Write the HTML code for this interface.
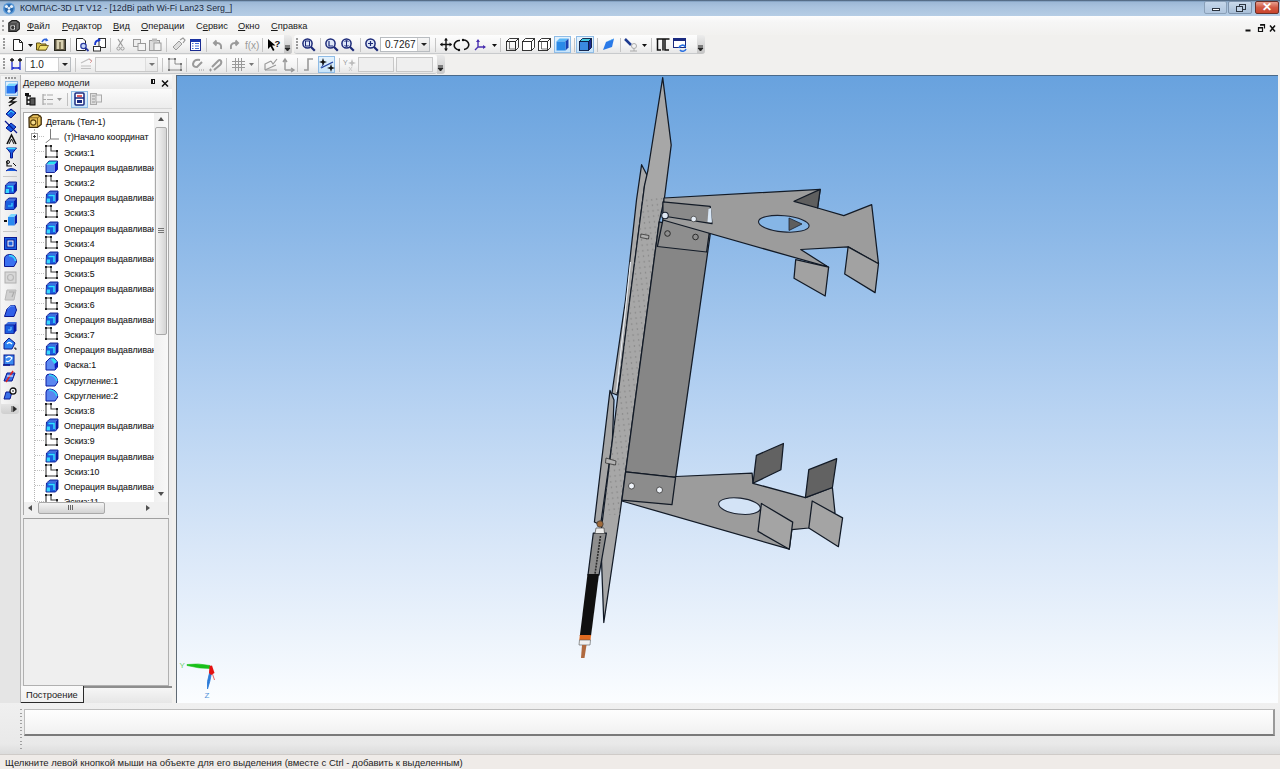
<!DOCTYPE html>
<html><head><meta charset="utf-8">
<style>
*{margin:0;padding:0;box-sizing:border-box}
html,body{width:1280px;height:769px;overflow:hidden;background:#f1f0ee;font-family:"Liberation Sans",sans-serif;font-size:9px;color:#000;position:relative}
.a{position:absolute}
svg{position:absolute;overflow:visible}
#title{left:0;top:0;width:1280px;height:16px;background:linear-gradient(#3c4c5e 0,#6f8fb0 1px,#9cb8d6 2px,#a9c3de 45%,#b6cde5 100%)}
#title .t{left:20px;top:3px;font-size:8.8px;color:#1b2a40;white-space:nowrap}
#menu{left:0;top:16px;width:1280px;height:19px;background:linear-gradient(#fdfdfd 0,#f6f6f6 6px,#f2f1ef 19px)}
#menu span{position:absolute;top:5px;font-size:9.3px;color:#1a1a1a;white-space:nowrap}
.tbar{height:19px;background:linear-gradient(#fdfdfd,#f4f4f4 60%,#e6e6e6);border-bottom:1px solid #c8cacc;border-radius:0 3px 3px 0}
.grip{width:2px;height:11px;border-left:2px dotted #a8a8a8}
.sep{width:1px;height:15px;background:#c8c8c8;border-right:1px solid #fff}
.chev{width:8px;height:19px;background:linear-gradient(#e8e8e8,#c9c9c9);border-radius:0 3px 3px 0}
.combo{height:15px;background:#fff;border:1px solid #b8bcc0;font-size:9.5px;color:#222}
.combo .dd{position:absolute;right:0;top:0;width:12px;height:13px;background:linear-gradient(#f6f6f6,#e2e2e2);border-left:1px solid #cfcfcf}
.combo .dd:after{content:"";position:absolute;left:3px;top:5px;border-left:3px solid transparent;border-right:3px solid transparent;border-top:3px solid #222}
.hl{background:linear-gradient(#e4f2fd,#c8e4fa);border:1px solid #8fbce6}
#lefttb{left:1px;top:76px;width:18px;height:330px;background:linear-gradient(90deg,#f6f6f6,#e6e6e6);border-radius:0 0 4px 4px}
#panel{left:20px;top:75px;width:152px;height:628px;background:#eeeeee;border-left:1px solid #b4b4b4}
#phead{left:21px;top:75px;width:151px;height:14px;background:linear-gradient(#fafafa,#e9e9e9)}
#ptb{left:21px;top:89px;width:151px;height:20px;background:linear-gradient(#fbfbfb,#ececec);border-bottom:1px solid #d6d6d6}
#tree{left:23px;top:112px;width:146px;height:403px;background:#fff;border:1px solid #a9a9a9;overflow:hidden}
.row{position:absolute;left:0;height:15px;white-space:nowrap;font-size:9.6px;color:#111;transform:scaleX(0.91);transform-origin:0 0;-webkit-text-stroke:0.1px #333}
#lower{left:23px;top:518px;width:146px;height:168px;background:#efefef;border:1px solid #b0b0b0;border-top-color:#a0a0a0}
#view{left:176px;top:75px;width:1102px;height:628px;background:linear-gradient(#68a2de 0%,#8cb8e7 25%,#b3d0f1 50%,#d9e7f8 75%,#fbfdff 100%);border-left:1px solid #606a74;border-top:1px solid #4a6a8a;overflow:hidden}
#bottom{left:0;top:703px;width:1280px;height:51px;background:linear-gradient(#f0f0f0,#e9e9e9 80%,#dcdcdc)}
#inp{left:24px;top:709px;width:1251px;height:27px;background:linear-gradient(#fefefe,#f1f1f1);border:1px solid #bdbdbd;border-bottom:2px solid #7a7a7a;border-right:2px solid #9a9a9a}
#status{left:0;top:754px;width:1280px;height:15px;background:#efebe8;border-top:1px solid #cfcbc8}
#status .t{left:5px;top:2px;font-size:9.5px;color:#1c1c1c;white-space:nowrap}
</style></head><body>
<svg width="0" height="0" style="position:absolute;left:0;top:0"><defs>
<symbol id="i-det" viewBox="0 0 14 14"><path d="M1 3.5 L5 0.7 L10 0.7 L13.2 3.2 L13.2 10.5 L9.5 13.3 L1.2 13.3 Z" fill="#e9c25a" stroke="#3b2a0c" stroke-width="1.3"/><path d="M1.5 3.8 L9.5 3.8 L13 1.5 M9.5 3.8 V13" stroke="#6b4a10" stroke-width="0.8" fill="none"/><circle cx="5.3" cy="8.5" r="2.6" fill="#f5dc8a" stroke="#5a3f0c" stroke-width="1.1"/></symbol>
<symbol id="i-sk" viewBox="0 0 14 14"><path d="M1 1 H6 V6 H12 V12 H1 Z" fill="none" stroke="#3a3a3a" stroke-width="1.1"/><g fill="#222"><rect x="0" y="0" width="2" height="2"/><rect x="5" y="0" width="2" height="2"/><rect x="11" y="5" width="2" height="2"/><rect x="11" y="11" width="2" height="2"/><rect x="0" y="11" width="2" height="2"/></g></symbol>
<symbol id="i-cube" viewBox="0 0 14 14"><path d="M1 4.5 L4 1 L12.5 1 L9.5 4.5 Z" fill="#29e3f2"/><path d="M9.5 4.5 L12.5 1 L12.5 9.5 L9.5 12.5 Z" fill="#0c14c8"/><rect x="1" y="4.5" width="8.5" height="8" fill="#5b88ee"/><path d="M1 4.5 L4 1 L12.5 1 L12.5 9.5 L9.5 12.5 L1 12.5 Z" fill="none" stroke="#0a1890" stroke-width="0.9"/></symbol>
<symbol id="i-boss" viewBox="0 0 14 14"><path d="M2 4 L5 1 L13 1 L10.5 4 Z" fill="#3f6fe0"/><path d="M10.5 4 L13 1 L13 10 L10.5 13 Z" fill="#0a1aa8"/><rect x="1.5" y="4" width="9" height="9" fill="#1a5ee0"/><path d="M3.5 5.5 H9 V11" fill="none" stroke="#33e0ff" stroke-width="1.5"/><rect x="1" y="8.5" width="4" height="4.5" fill="#38d8ff"/><path d="M1.5 4 L5 1 L13 1 L13 10 L10.5 13 L1 13 Z" fill="none" stroke="#0a1890" stroke-width="0.9"/></symbol>
<symbol id="i-cham" viewBox="0 0 14 14"><path d="M1 13 V5 L5 1 H9 L12.5 5 V10 L10 13 Z" fill="#5c8af2" stroke="#0a1aa0" stroke-width="1"/><path d="M5.5 1.5 L9 1.5 L12 5 L9.5 7 Z" fill="#2ee0f5"/><path d="M9.5 7 L12 5 V10 L10 12.5 Z" fill="#0c1cc0"/></symbol>
<symbol id="i-fil" viewBox="0 0 14 14"><path d="M1 13 V4 Q1 1 5 1 Q12 1.5 12.8 9 L10 13 Z" fill="#5a86f0" stroke="#0a1aa0" stroke-width="1"/><path d="M4 2 Q10 2 12 8" fill="none" stroke="#30d8f5" stroke-width="1.5"/></symbol>
<symbol id="i-axis" viewBox="0 0 14 14"><path d="M5.5 0 V10 H14 M5.5 10 L0.5 14" fill="none" stroke="#7a7a7a" stroke-width="1"/></symbol>
</defs></svg>

<div id="title" class="a"><div class="t a">КОМПАС-3D LT V12 - [12dBi path Wi-Fi Lan23 Serg_]</div>
<svg style="left:2px;top:2px" width="14" height="13" viewBox="0 0 14 13"><circle cx="7" cy="6.5" r="6" fill="#5a9ad8"/><circle cx="7" cy="6.5" r="4.5" fill="#2a6ab0"/><circle cx="4.5" cy="4.5" r="1.6" fill="#e8f2fb"/><circle cx="9.5" cy="4.5" r="1.6" fill="#e8f2fb"/><circle cx="7" cy="9.2" r="1.6" fill="#e8f2fb"/><circle cx="7" cy="6.2" r="1.2" fill="#e8f2fb"/></svg>
<div class="a" style="left:1204px;top:1px;width:23px;height:13px;border:1px solid #8aa0b8;border-radius:2px;background:linear-gradient(#c4d6ea,#b0c6de)"><div class="a" style="left:7px;top:6px;width:8px;height:3px;border:1px solid #2b3440;background:#fff"></div></div>
<div class="a" style="left:1228px;top:1px;width:24px;height:13px;border:1px solid #7d93ad;border-radius:2px;background:linear-gradient(#c9d9ea,#a8bfd8)"><div class="a" style="left:10px;top:2px;width:7px;height:6px;border:1px solid #2b3440"></div><div class="a" style="left:7px;top:4px;width:7px;height:6px;border:1px solid #2b3440;background:#c0d2e6"></div></div>
<div class="a" style="left:1255px;top:1px;width:24px;height:13px;border:1px solid #6b3028;border-radius:2px;background:linear-gradient(#e8a090,#d25a44 50%,#c9442c)"><div class="a" style="left:6px;top:-2px;font-size:12px;font-weight:bold;color:#fff">✕</div></div>
</div>
<div id="menu" class="a">
<div class="grip a" style="left:2px;top:4px"></div>
<svg style="left:8px;top:4px" width="12" height="12" viewBox="0 0 12 12"><path d="M0.8 3 L4 0.7 L8.5 0.7 L11.3 2.8 L11.3 9 L8.3 11.3 L0.8 11.3 Z" fill="#707070" stroke="#222" stroke-width="1.2"/><path d="M1.2 3.4 H8.2 L11 1.3 M8.2 3.4 V11" stroke="#444" stroke-width="0.8" fill="none"/><rect x="2" y="5" width="5.5" height="5" fill="#f2f2f2" stroke="#222" stroke-width="0.8"/><circle cx="4.7" cy="7.5" r="1.7" fill="#333"/></svg>
<span style="left:27px"><u>Ф</u>айл</span>
<span style="left:62px"><u>Р</u>едактор</span>
<span style="left:113px"><u>В</u>ид</span>
<span style="left:141px"><u>О</u>перации</span>
<span style="left:196px">С<u>е</u>рвис</span>
<span style="left:238px"><u>О</u>кно</span>
<span style="left:271px"><u>С</u>правка</span>
<svg style="left:1244px;top:7px" width="34" height="10" viewBox="0 0 34 10"><rect x="1.5" y="6.5" width="5" height="2" fill="#111"/><path d="M16.5 1.5 H20.5 V5.5 M14.5 4.5 H18.5 V8.5 H14.5 Z" fill="none" stroke="#111" stroke-width="1.2"/><path d="M16 2 H21" stroke="#111" stroke-width="1.5"/><path d="M14 4.8 H19" stroke="#111" stroke-width="1.5"/><path d="M26 2.5 L31 8.5 M31 2.5 L26 8.5" stroke="#111" stroke-width="1.5"/></svg>
</div>

<div id="tb1" class="a tbar" style="left:0;top:35px;width:292px"></div>
<div id="tb2" class="a tbar" style="left:0;top:55px;width:437px"></div>
<div class="a chev" style="left:437px;top:55px;height:19px"></div>
<div class="a" style="left:3px;top:38px;width:2px;height:2px;background:#9a9a9a"></div>
<div class="a" style="left:3px;top:41px;width:2px;height:2px;background:#9a9a9a"></div>
<div class="a" style="left:3px;top:44px;width:2px;height:2px;background:#9a9a9a"></div>
<div class="a" style="left:3px;top:47px;width:2px;height:2px;background:#9a9a9a"></div>
<svg style="left:13px;top:39px" width="10" height="12" viewBox="0 0 10 12"><path d="M0.5 0.5 H6.5 L9.5 3.5 V11.5 H0.5 Z" fill="#fff" stroke="#222" stroke-width="1"/><path d="M6.5 0.5 V3.5 H9.5" fill="none" stroke="#222"/></svg>
<svg style="left:28px;top:44px" width="5" height="3" viewBox="0 0 5 3"><path d="M0 0 H5 L2.5 3 Z" fill="#111"/></svg>
<svg style="left:36px;top:38px" width="13" height="13" viewBox="0 0 13 13"><path d="M0.5 5 H4 L5 6 H10 V12 H0.5 Z" fill="#d8c048" stroke="#5a4a10"/><path d="M2 12 L4 7.5 H12.5 L10 12 Z" fill="#f0e070" stroke="#5a4a10" stroke-width="0.8"/><path d="M6 4 Q8 0 11 2" fill="none" stroke="#2a60d8" stroke-width="1.6"/><path d="M10 0 L12.5 2.5 L9.5 3.5 Z" fill="#2a60d8"/></svg>
<svg style="left:54px;top:39px" width="12" height="12" viewBox="0 0 12 12"><rect x="0.5" y="0.5" width="11" height="11" fill="#5c5440" stroke="#2a2a20"/><rect x="2.5" y="1" width="7" height="9" fill="#d8d0b0"/><rect x="5" y="3" width="2" height="7" fill="#8a8060"/></svg>
<div class="a" style="left:70px;top:38px;width:1px;height:14px;background:#c5c5c5"></div>
<svg style="left:76px;top:38px" width="13" height="14" viewBox="0 0 13 14"><path d="M0.5 0.5 H7 L9.5 3 V12.5 H0.5 Z" fill="#fff" stroke="#222"/><circle cx="7.5" cy="8" r="2.7" fill="#c8d8f8" stroke="#2838a0" stroke-width="1.2"/><path d="M9.5 10 L12.5 13" stroke="#2838a0" stroke-width="1.8"/></svg>
<svg style="left:93px;top:38px" width="13" height="14" viewBox="0 0 13 14"><rect x="6" y="0.5" width="6.5" height="9" fill="#fff" stroke="#333"/><rect x="0.5" y="8.5" width="7" height="4.5" fill="#fff" stroke="#333"/><path d="M2 7 Q2 2 7 2" fill="none" stroke="#1838d0" stroke-width="1.8"/><path d="M5 0 L8 2 L5 4 Z" fill="#1838d0"/></svg>
<div class="a" style="left:110px;top:38px;width:1px;height:14px;background:#c5c5c5"></div>
<svg style="left:117px;top:39px" width="7" height="12" viewBox="0 0 7 12"><path d="M1 0 L5.5 7 M6 0 L1.5 7" stroke="#9a9a9a" stroke-width="1.2"/><circle cx="1.5" cy="9.5" r="1.6" fill="none" stroke="#9a9a9a"/><circle cx="5.5" cy="9.5" r="1.6" fill="none" stroke="#9a9a9a"/></svg>
<svg style="left:133px;top:39px" width="13" height="12" viewBox="0 0 13 12"><rect x="0.5" y="0.5" width="7" height="7" fill="#eee" stroke="#9a9a9a"/><rect x="5" y="4.5" width="7.5" height="7" fill="#f4f4f4" stroke="#9a9a9a"/></svg>
<svg style="left:149px;top:38px" width="13" height="13" viewBox="0 0 13 13"><rect x="0.5" y="2.5" width="10" height="10" fill="#ddd" stroke="#9a9a9a"/><rect x="3" y="0.5" width="5" height="3" fill="#bbb"/><rect x="5" y="5" width="7" height="7.5" fill="#f2f2f2" stroke="#9a9a9a"/></svg>
<div class="a" style="left:166px;top:38px;width:1px;height:14px;background:#c5c5c5"></div>
<svg style="left:172px;top:38px" width="13" height="13" viewBox="0 0 13 13"><path d="M1 9 L7 3 L10 6 L4 12 Z" fill="#ddd" stroke="#9a9a9a"/><path d="M8 2 L11 0 L13 2 L11 5" fill="none" stroke="#9a9a9a" stroke-width="1.2"/></svg>
<svg style="left:190px;top:39px" width="11" height="12" viewBox="0 0 11 12"><rect x="0.5" y="0.5" width="10" height="11" fill="#fff" stroke="#1a2a90"/><rect x="0.5" y="0.5" width="10" height="2.5" fill="#1a3ab0"/><path d="M2 4.5 H3.5 M5 4.5 H9 M2 7 H3.5 M5 7 H9 M2 9.5 H3.5 M5 9.5 H9" stroke="#3060d0" stroke-width="0.9"/></svg>
<div class="a" style="left:206px;top:38px;width:1px;height:14px;background:#c5c5c5"></div>
<svg style="left:213px;top:40px" width="10" height="10" viewBox="0 0 10 10"><path d="M8 9 Q9 3 4 3 H1 M3.5 0.5 L1 3 L3.5 5.5" fill="none" stroke="#9a9a9a" stroke-width="2"/></svg>
<svg style="left:229px;top:40px" width="10" height="10" viewBox="0 0 10 10"><path d="M2 9 Q1 3 6 3 H9 M6.5 0.5 L9 3 L6.5 5.5" fill="none" stroke="#9a9a9a" stroke-width="2"/></svg>
<svg style="left:245px;top:39px" width="13" height="12" viewBox="0 0 13 12"><text x="0" y="10" font-size="10" fill="#9a9a9a" font-family="Liberation Sans">f(x)</text></svg>
<div class="a" style="left:262px;top:38px;width:1px;height:14px;background:#c5c5c5"></div>
<svg style="left:267px;top:38px" width="15" height="14" viewBox="0 0 15 14"><path d="M1 1 L1 11 L3.5 8.5 L6 13 L7.5 12 L5 7.5 L8.5 7.5 Z" fill="#000"/><text x="7.5" y="9" font-size="9.5" font-weight="bold" fill="#111" font-family="Liberation Sans">?</text></svg>
<div class="a" style="left:284px;top:35px;width:8px;height:19px;background:linear-gradient(#ececec,#c4c4c4);border-radius:0 3px 3px 0"></div>
<svg style="left:285px;top:46px" width="5" height="6" viewBox="0 0 5 6"><path d="M0 0 H5 M0 2 L5 2 L2.5 5 Z" stroke="#222" stroke-width="1" fill="#222"/></svg>
<div class="a tbar" style="left:294px;top:35px;width:403px;border-radius:3px 0 0 3px"></div>
<div class="a" style="left:296px;top:38px;width:2px;height:2px;background:#9a9a9a"></div>
<div class="a" style="left:296px;top:41px;width:2px;height:2px;background:#9a9a9a"></div>
<div class="a" style="left:296px;top:44px;width:2px;height:2px;background:#9a9a9a"></div>
<div class="a" style="left:296px;top:47px;width:2px;height:2px;background:#9a9a9a"></div>
<svg style="left:302px;top:38px" width="14" height="14" viewBox="0 0 14 14"><circle cx="5.5" cy="5.5" r="4.6" fill="#dfe8f8" stroke="#1c2a78" stroke-width="1.5"/><path d="M8.8 8.8 L12.8 12.8" stroke="#1c2a78" stroke-width="2.2"/><rect x="3.5" y="3" width="4" height="5" fill="none" stroke="#1c2a78" stroke-width="1"/></svg>
<div class="a" style="left:320px;top:38px;width:1px;height:14px;background:#c5c5c5"></div>
<svg style="left:325px;top:38px" width="14" height="14" viewBox="0 0 14 14"><circle cx="5.5" cy="5.5" r="4.6" fill="#dfe8f8" stroke="#1c2a78" stroke-width="1.5"/><path d="M8.8 8.8 L12.8 12.8" stroke="#1c2a78" stroke-width="2.2"/><path d="M4 3 V8 H8" fill="none" stroke="#1c2a78" stroke-width="1.2"/></svg>
<svg style="left:341px;top:38px" width="14" height="14" viewBox="0 0 14 14"><circle cx="5.5" cy="5.5" r="4.6" fill="#dfe8f8" stroke="#1c2a78" stroke-width="1.5"/><path d="M8.8 8.8 L12.8 12.8" stroke="#1c2a78" stroke-width="2.2"/><path d="M5.5 2.5 V8.5 M3.5 4 L5.5 2 L7.5 4 M3.5 7 L5.5 9 L7.5 7" fill="none" stroke="#1c2a78" stroke-width="1"/></svg>
<div class="a" style="left:360px;top:38px;width:1px;height:14px;background:#c5c5c5"></div>
<svg style="left:365px;top:38px" width="14" height="14" viewBox="0 0 14 14"><circle cx="5.5" cy="5.5" r="4.6" fill="#dfe8f8" stroke="#1c2a78" stroke-width="1.5"/><path d="M8.8 8.8 L12.8 12.8" stroke="#1c2a78" stroke-width="2.2"/><path d="M3 5.5 H8 M5.5 3 V8" stroke="#1c2a78" stroke-width="1.2"/></svg>
<div class="a combo" style="left:380px;top:37px;width:50px;height:15px"><div class="a" style="left:4px;top:1px;font-size:10px;color:#222">0.7267</div><div class="dd"></div></div>
<div class="a" style="left:435px;top:38px;width:1px;height:14px;background:#c5c5c5"></div>
<svg style="left:440px;top:38px" width="12" height="13" viewBox="0 0 12 13"><path d="M6 0.5 V12.5 M0.5 6.5 H11.5" stroke="#111" stroke-width="1.4"/><path d="M6 0 L8 2.5 H4 Z M6 13 L8 10.5 H4 Z M0 6.5 L2.5 4.5 V8.5 Z M12 6.5 L9.5 4.5 V8.5 Z" fill="#111"/></svg>
<svg style="left:455px;top:39px" width="13" height="12" viewBox="0 0 13 12"><path d="M5 1.5 A5 4.5 0 0 0 4 11 M8 1 A5 4.5 0 0 1 9 10.5" fill="none" stroke="#111" stroke-width="1.6"/><circle cx="4" cy="11" r="1.2" fill="#111"/><circle cx="8" cy="1" r="1.2" fill="#111"/></svg>
<svg style="left:474px;top:39px" width="12" height="12" viewBox="0 0 12 12"><path d="M4 1 V8 L1 11 M4 8 H11" fill="none" stroke="#4a30b0" stroke-width="1.4"/><path d="M4 0 L6 3 H2 Z M12 8 L9 6 V10 Z" fill="#4a30b0"/></svg>
<svg style="left:492px;top:44px" width="5" height="3" viewBox="0 0 5 3"><path d="M0 0 H5 L2.5 3 Z" fill="#111"/></svg>
<div class="a" style="left:500px;top:38px;width:1px;height:14px;background:#c5c5c5"></div>
<svg style="left:506px;top:38px" width="13" height="13" viewBox="0 0 13 13"><path d="M0.5 3.5 L3.5 0.5 H12.5 L9.5 3.5 Z" fill="none" stroke="#222" stroke-width="0.9"/><path d="M9.5 3.5 L12.5 0.5 V9.5 L9.5 12.5 Z" fill="none" stroke="#222" stroke-width="0.9"/><rect x="0.5" y="3.5" width="9" height="9" fill="none" stroke="#222" stroke-width="0.9"/><path d="M3.5 3.5 V11 M3.5 11 H10" fill="none" stroke="#555" stroke-width="0.8"/></svg>
<svg style="left:522px;top:38px" width="13" height="13" viewBox="0 0 13 13"><path d="M0.5 3.5 L3.5 0.5 H12.5 L9.5 3.5 Z" fill="#fff" stroke="#222" stroke-width="0.9"/><path d="M9.5 3.5 L12.5 0.5 V9.5 L9.5 12.5 Z" fill="#fff" stroke="#222" stroke-width="0.9"/><rect x="0.5" y="3.5" width="9" height="9" fill="#fff" stroke="#222" stroke-width="0.9"/></svg>
<svg style="left:538px;top:38px" width="13" height="13" viewBox="0 0 13 13"><path d="M0.5 3.5 L3.5 0.5 H12.5 L9.5 3.5 Z" fill="#fff" stroke="#222" stroke-width="0.9"/><path d="M9.5 3.5 L12.5 0.5 V9.5 L9.5 12.5 Z" fill="#fff" stroke="#222" stroke-width="0.9"/><rect x="0.5" y="3.5" width="9" height="9" fill="#fff" stroke="#222" stroke-width="0.9"/><path d="M3.5 3.5 V11 M3.5 11 H10" fill="none" stroke="#555" stroke-width="0.8"/></svg>
<div class="a hl" style="left:554px;top:36px;width:17px;height:17px"></div>
<svg style="left:556px;top:38px" width="13" height="13" viewBox="0 0 13 13"><path d="M0.5 3.5 L3.5 0.5 H12.5 L9.5 3.5 Z" fill="#5ab8f8" stroke="none" stroke-width="0.9"/><path d="M9.5 3.5 L12.5 0.5 V9.5 L9.5 12.5 Z" fill="#1a40b0" stroke="none" stroke-width="0.9"/><rect x="0.5" y="3.5" width="9" height="9" fill="#2a8ae8" stroke="none" stroke-width="0.9"/></svg>
<div class="a" style="left:574px;top:38px;width:1px;height:14px;background:#c5c5c5"></div>
<div class="a hl" style="left:576px;top:36px;width:18px;height:17px"></div>
<svg style="left:579px;top:38px" width="13" height="13" viewBox="0 0 13 13"><path d="M0.5 3.5 L3.5 0.5 H12.5 L9.5 3.5 Z" fill="#40c8e0" stroke="#0a1a40" stroke-width="0.9"/><path d="M9.5 3.5 L12.5 0.5 V9.5 L9.5 12.5 Z" fill="#1a2a90" stroke="#0a1a40" stroke-width="0.9"/><rect x="0.5" y="3.5" width="9" height="9" fill="#3a8ae0" stroke="#0a1a40" stroke-width="0.9"/></svg>
<div class="a" style="left:597px;top:38px;width:1px;height:14px;background:#c5c5c5"></div>
<svg style="left:602px;top:38px" width="13" height="13" viewBox="0 0 13 13"><path d="M1 12 L4 4 L12 0.5 L10 9 Z" fill="#2a7ae8"/><path d="M4 4 L12 0.5 L10 2 Z" fill="#60c0f8"/></svg>
<div class="a" style="left:620px;top:38px;width:1px;height:14px;background:#c5c5c5"></div>
<svg style="left:624px;top:38px" width="15" height="14" viewBox="0 0 15 14"><path d="M1 1 L7 7" stroke="#1c3a90" stroke-width="2.5"/><circle cx="10" cy="8" r="2.5" fill="none" stroke="#aaa"/><path d="M10 10.5 V13 M6 13 H13" stroke="#aaa"/></svg>
<svg style="left:642px;top:44px" width="5" height="3" viewBox="0 0 5 3"><path d="M0 0 H5 L2.5 3 Z" fill="#111"/></svg>
<div class="a" style="left:651px;top:38px;width:1px;height:14px;background:#c5c5c5"></div>
<svg style="left:656px;top:38px" width="14" height="13" viewBox="0 0 14 13"><path d="M0.5 1 H13.5 M7 1 V12.5 M1.5 1 V12 H5 M9 1 V12 H13" fill="none" stroke="#111" stroke-width="1.5"/></svg>
<svg style="left:673px;top:38px" width="14" height="14" viewBox="0 0 14 14"><rect x="0.5" y="0.5" width="12" height="9" fill="#fff" stroke="#1a2a80"/><rect x="0.5" y="0.5" width="12" height="2.5" fill="#1a2a80"/><path d="M6 10 A3.5 3.5 0 0 1 12.5 9 M13 11 A3.5 3.5 0 0 1 7 12" fill="none" stroke="#2a70e0" stroke-width="1.6"/></svg>
<div class="a" style="left:697px;top:35px;width:8px;height:19px;background:linear-gradient(#ececec,#c4c4c4);border-radius:0 3px 3px 0"></div>
<svg style="left:698px;top:46px" width="5" height="6" viewBox="0 0 5 6"><path d="M0 0 H5 M0 2 L5 2 L2.5 5 Z" stroke="#222" stroke-width="1" fill="#222"/></svg>
<div class="a" style="left:3px;top:58px;width:2px;height:2px;background:#9a9a9a"></div>
<div class="a" style="left:3px;top:61px;width:2px;height:2px;background:#9a9a9a"></div>
<div class="a" style="left:3px;top:64px;width:2px;height:2px;background:#9a9a9a"></div>
<div class="a" style="left:3px;top:67px;width:2px;height:2px;background:#9a9a9a"></div>
<svg style="left:9px;top:57px" width="14" height="15" viewBox="0 0 14 15"><path d="M3 1 V5 M1 3 H5 M11 1 V5 M9 3 H13" stroke="#111" stroke-width="1.3"/><path d="M3 5 V13 M11 5 V13 M3 11 H11" stroke="#2030d0" stroke-width="1.3"/><path d="M3 11 L5 10 V12 Z M11 11 L9 10 V12 Z" fill="#2030d0"/></svg>
<div class="a combo" style="left:25px;top:57px;width:46px;height:15px"><div class="a" style="left:4px;top:1px;font-size:10px;color:#222">1.0</div><div class="dd"></div></div>
<div class="a" style="left:75px;top:58px;width:1px;height:14px;background:#c5c5c5"></div>
<svg style="left:80px;top:58px" width="13" height="13" viewBox="0 0 13 13"><path d="M1 5 L9 1 L12 3 M1 8 H11 M1 10.5 H11" fill="none" stroke="#c0c0c0" stroke-width="1.2"/><path d="M9 1 L12 3 L10 5" fill="none" stroke="#e0a0a0" stroke-width="1"/></svg>
<div class="a combo" style="left:95px;top:57px;width:63px;height:15px;background:#f3f3f3;border-color:#c8c8c8"><div class="dd" style="opacity:.6"></div></div>
<div class="a" style="left:162px;top:58px;width:1px;height:14px;background:#c5c5c5"></div>
<svg style="left:168px;top:58px" width="14" height="13" viewBox="0 0 14 13"><path d="M1 1 V12 H13 V6 H7 V1 Z" fill="none" stroke="#8a8a8a" stroke-width="1"/><rect x="0" y="0" width="2" height="2" fill="#777"/><rect x="6" y="0" width="2" height="2" fill="#777"/><rect x="12" y="5" width="2" height="2" fill="#777"/><rect x="12" y="11" width="2" height="2" fill="#777"/><rect x="0" y="11" width="2" height="2" fill="#777"/></svg>
<div class="a" style="left:186px;top:58px;width:1px;height:14px;background:#c5c5c5"></div>
<svg style="left:191px;top:58px" width="14" height="13" viewBox="0 0 14 13"><path d="M9 2 Q3 1 2 6 Q2 9 6 9 L11 4" fill="none" stroke="#9a9a9a" stroke-width="2"/><path d="M8 12 H13" stroke="#9a9a9a" stroke-dasharray="1 1"/></svg>
<svg style="left:208px;top:58px" width="14" height="13" viewBox="0 0 14 13"><path d="M4 9 L10 3 Q12 1 13 3 Q14 5 12 7 L6 12" fill="none" stroke="#9a9a9a" stroke-width="2"/><path d="M1 12 H4 M2.5 10.5 V13.5" stroke="#9a9a9a"/></svg>
<div class="a" style="left:226px;top:58px;width:1px;height:14px;background:#c5c5c5"></div>
<svg style="left:232px;top:58px" width="13" height="13" viewBox="0 0 13 13"><path d="M0 3.5 H13 M0 6.5 H13 M0 9.5 H13 M3.5 0 V13 M6.5 0 V13 M9.5 0 V13" stroke="#9a9a9a" stroke-width="1"/></svg>
<svg style="left:249px;top:63px" width="5" height="3" viewBox="0 0 5 3"><path d="M0 0 H5 L2.5 3 Z" fill="#777"/></svg>
<div class="a" style="left:258px;top:58px;width:1px;height:14px;background:#c5c5c5"></div>
<svg style="left:264px;top:58px" width="13" height="13" viewBox="0 0 13 13"><path d="M1 12 L12 7 M1 12 V6 L7 3 M7 3 L9 6 L13 1" fill="none" stroke="#9a9a9a" stroke-width="1.2"/><path d="M1 12 H13" stroke="#9a9a9a"/></svg>
<svg style="left:281px;top:58px" width="13" height="13" viewBox="0 0 13 13"><path d="M4 12 V2 M4 12 H13 M2 4 L4 1 L6 4 M10 10 L13 12 L10 14" fill="none" stroke="#9a9a9a" stroke-width="1.4"/></svg>
<div class="a" style="left:297px;top:58px;width:1px;height:14px;background:#c5c5c5"></div>
<svg style="left:304px;top:58px" width="10" height="13" viewBox="0 0 10 13"><path d="M0 12 H4 V1 H9" fill="none" stroke="#9a9a9a" stroke-width="1.6"/></svg>
<div class="a hl" style="left:318px;top:56px;width:17px;height:17px"></div>
<svg style="left:320px;top:58px" width="14" height="14" viewBox="0 0 14 14"><path d="M1 10 L13 4" stroke="#2040a0" stroke-width="1.3"/><path d="M1 10 L4 5" stroke="#4060b0" stroke-width="1"/><path d="M3 0 L4 3 L7 4 L4 5 L3 8 L2 5 L-1 4 L2 3 Z M11 6 L12 9 L15 10 L12 11 L11 14 L10 11 L7 10 L10 9 Z" fill="#111"/></svg>
<div class="a" style="left:339px;top:58px;width:1px;height:14px;background:#c5c5c5"></div>
<svg style="left:343px;top:58px" width="13" height="13" viewBox="0 0 13 13"><text x="0" y="7" font-size="7" fill="#9a9a9a" font-family="Liberation Sans">Y</text><path d="M9 1 L10 4 L13 5 L10 6 L9 9 L8 6 L5 5 L8 4 Z" fill="#bbb"/><path d="M6 9 L9 13 M9 9 L6 13" stroke="#ccc"/></svg>
<div class="a" style="left:358px;top:57px;width:36px;height:15px;background:#efefef;border:1px solid #c8c8c8"></div>
<div class="a" style="left:396px;top:57px;width:37px;height:15px;background:#efefef;border:1px solid #c8c8c8"></div>
<svg style="left:438px;top:66px" width="5" height="6" viewBox="0 0 5 6"><path d="M0 0 H5 M0 2 L5 2 L2.5 5 Z" stroke="#222" stroke-width="1" fill="#222"/></svg>

<div class="a" style="left:0;top:75px;width:20px;height:628px;background:#e5e5e5"></div>
<div id="lefttb" class="a"></div>
<div id="panel" class="a"></div>
<div id="phead" class="a"><div class="a" style="left:2px;top:3px;font-size:9.3px;color:#222;white-space:nowrap">Дерево модели</div>
<div class="a" style="left:130px;top:4px;width:4px;height:5px;border:1px solid #111;border-left-width:2px"></div>
<svg style="left:140px;top:5px" width="8" height="7" viewBox="0 0 8 7"><path d="M1 0.5 L7 6.5 M7 0.5 L1 6.5" stroke="#111" stroke-width="1.5"/></svg>
</div>
<div id="ptb" class="a"></div>
<div id="tree" class="a"><div class="a" style="left:10px;top:16px;width:1px;height:400px;border-left:1px dotted #b4b4b4"></div>
<svg style="left:4px;top:1px" width="14" height="14"><use href="#i-det"/></svg>
<div class="row" style="left:22px;top:1.2px;line-height:15px">Деталь (Тел-1)</div>
<div class="a" style="left:11px;top:23px;width:9px;height:1px;border-top:1px dotted #c0c0c0"></div>
<div class="a" style="left:7px;top:20px;width:7px;height:7px;border:1px solid #a0a0a0;background:#fff"><div class="a" style="left:1px;top:2px;width:3px;height:1px;background:#333"></div><div class="a" style="left:2px;top:1px;width:1px;height:3px;background:#333"></div></div>
<svg style="left:21px;top:16px" width="14" height="14"><use href="#i-axis"/></svg>
<div class="row" style="left:39.5px;top:16.4px;line-height:15px">(т)Начало координат</div>
<div class="a" style="left:11px;top:38px;width:9px;height:1px;border-top:1px dotted #c0c0c0"></div>
<svg style="left:21px;top:32px" width="14" height="14"><use href="#i-sk"/></svg>
<div class="row" style="left:39.5px;top:31.6px;line-height:15px">Эскиз:1</div>
<div class="a" style="left:11px;top:53px;width:9px;height:1px;border-top:1px dotted #c0c0c0"></div>
<svg style="left:21px;top:47px" width="14" height="14"><use href="#i-cube"/></svg>
<div class="row" style="left:39.5px;top:46.8px;line-height:15px">Операция выдавливания:1</div>
<div class="a" style="left:11px;top:69px;width:9px;height:1px;border-top:1px dotted #c0c0c0"></div>
<svg style="left:21px;top:62px" width="14" height="14"><use href="#i-sk"/></svg>
<div class="row" style="left:39.5px;top:62.0px;line-height:15px">Эскиз:2</div>
<div class="a" style="left:11px;top:84px;width:9px;height:1px;border-top:1px dotted #c0c0c0"></div>
<svg style="left:21px;top:77px" width="14" height="14"><use href="#i-boss"/></svg>
<div class="row" style="left:39.5px;top:77.2px;line-height:15px">Операция выдавливания:2</div>
<div class="a" style="left:11px;top:99px;width:9px;height:1px;border-top:1px dotted #c0c0c0"></div>
<svg style="left:21px;top:92px" width="14" height="14"><use href="#i-sk"/></svg>
<div class="row" style="left:39.5px;top:92.4px;line-height:15px">Эскиз:3</div>
<div class="a" style="left:11px;top:114px;width:9px;height:1px;border-top:1px dotted #c0c0c0"></div>
<svg style="left:21px;top:108px" width="14" height="14"><use href="#i-boss"/></svg>
<div class="row" style="left:39.5px;top:107.6px;line-height:15px">Операция выдавливания:3</div>
<div class="a" style="left:11px;top:129px;width:9px;height:1px;border-top:1px dotted #c0c0c0"></div>
<svg style="left:21px;top:123px" width="14" height="14"><use href="#i-sk"/></svg>
<div class="row" style="left:39.5px;top:122.8px;line-height:15px">Эскиз:4</div>
<div class="a" style="left:11px;top:145px;width:9px;height:1px;border-top:1px dotted #c0c0c0"></div>
<svg style="left:21px;top:138px" width="14" height="14"><use href="#i-boss"/></svg>
<div class="row" style="left:39.5px;top:138.0px;line-height:15px">Операция выдавливания:4</div>
<div class="a" style="left:11px;top:160px;width:9px;height:1px;border-top:1px dotted #c0c0c0"></div>
<svg style="left:21px;top:153px" width="14" height="14"><use href="#i-sk"/></svg>
<div class="row" style="left:39.5px;top:153.2px;line-height:15px">Эскиз:5</div>
<div class="a" style="left:11px;top:175px;width:9px;height:1px;border-top:1px dotted #c0c0c0"></div>
<svg style="left:21px;top:168px" width="14" height="14"><use href="#i-boss"/></svg>
<div class="row" style="left:39.5px;top:168.4px;line-height:15px">Операция выдавливания:5</div>
<div class="a" style="left:11px;top:190px;width:9px;height:1px;border-top:1px dotted #c0c0c0"></div>
<svg style="left:21px;top:184px" width="14" height="14"><use href="#i-sk"/></svg>
<div class="row" style="left:39.5px;top:183.6px;line-height:15px">Эскиз:6</div>
<div class="a" style="left:11px;top:205px;width:9px;height:1px;border-top:1px dotted #c0c0c0"></div>
<svg style="left:21px;top:199px" width="14" height="14"><use href="#i-boss"/></svg>
<div class="row" style="left:39.5px;top:198.8px;line-height:15px">Операция выдавливания:6</div>
<div class="a" style="left:11px;top:221px;width:9px;height:1px;border-top:1px dotted #c0c0c0"></div>
<svg style="left:21px;top:214px" width="14" height="14"><use href="#i-sk"/></svg>
<div class="row" style="left:39.5px;top:214.0px;line-height:15px">Эскиз:7</div>
<div class="a" style="left:11px;top:236px;width:9px;height:1px;border-top:1px dotted #c0c0c0"></div>
<svg style="left:21px;top:229px" width="14" height="14"><use href="#i-boss"/></svg>
<div class="row" style="left:39.5px;top:229.2px;line-height:15px">Операция выдавливания:7</div>
<div class="a" style="left:11px;top:251px;width:9px;height:1px;border-top:1px dotted #c0c0c0"></div>
<svg style="left:21px;top:244px" width="14" height="14"><use href="#i-cham"/></svg>
<div class="row" style="left:39.5px;top:244.4px;line-height:15px">Фаска:1</div>
<div class="a" style="left:11px;top:266px;width:9px;height:1px;border-top:1px dotted #c0c0c0"></div>
<svg style="left:21px;top:260px" width="14" height="14"><use href="#i-fil"/></svg>
<div class="row" style="left:39.5px;top:259.6px;line-height:15px">Скругление:1</div>
<div class="a" style="left:11px;top:281px;width:9px;height:1px;border-top:1px dotted #c0c0c0"></div>
<svg style="left:21px;top:275px" width="14" height="14"><use href="#i-fil"/></svg>
<div class="row" style="left:39.5px;top:274.8px;line-height:15px">Скругление:2</div>
<div class="a" style="left:11px;top:297px;width:9px;height:1px;border-top:1px dotted #c0c0c0"></div>
<svg style="left:21px;top:290px" width="14" height="14"><use href="#i-sk"/></svg>
<div class="row" style="left:39.5px;top:290.0px;line-height:15px">Эскиз:8</div>
<div class="a" style="left:11px;top:312px;width:9px;height:1px;border-top:1px dotted #c0c0c0"></div>
<svg style="left:21px;top:305px" width="14" height="14"><use href="#i-boss"/></svg>
<div class="row" style="left:39.5px;top:305.2px;line-height:15px">Операция выдавливания:8</div>
<div class="a" style="left:11px;top:327px;width:9px;height:1px;border-top:1px dotted #c0c0c0"></div>
<svg style="left:21px;top:320px" width="14" height="14"><use href="#i-sk"/></svg>
<div class="row" style="left:39.5px;top:320.4px;line-height:15px">Эскиз:9</div>
<div class="a" style="left:11px;top:342px;width:9px;height:1px;border-top:1px dotted #c0c0c0"></div>
<svg style="left:21px;top:336px" width="14" height="14"><use href="#i-boss"/></svg>
<div class="row" style="left:39.5px;top:335.6px;line-height:15px">Операция выдавливания:9</div>
<div class="a" style="left:11px;top:357px;width:9px;height:1px;border-top:1px dotted #c0c0c0"></div>
<svg style="left:21px;top:351px" width="14" height="14"><use href="#i-sk"/></svg>
<div class="row" style="left:39.5px;top:350.8px;line-height:15px">Эскиз:10</div>
<div class="a" style="left:11px;top:372px;width:9px;height:1px;border-top:1px dotted #c0c0c0"></div>
<svg style="left:21px;top:366px" width="14" height="14"><use href="#i-boss"/></svg>
<div class="row" style="left:39.5px;top:366.0px;line-height:15px">Операция выдавливания:10</div>
<div class="a" style="left:11px;top:388px;width:9px;height:1px;border-top:1px dotted #c0c0c0"></div>
<svg style="left:21px;top:381px" width="14" height="14"><use href="#i-sk"/></svg>
<div class="row" style="left:39.5px;top:381.2px;line-height:15px">Эскиз:11</div></div>
<div id="lower" class="a"></div>
<div class="a" style="left:84px;top:686px;width:88px;height:17px;background:linear-gradient(#f6f6f6,#e6e6e6);border-top:2px solid #8e8e8e"></div>
<div class="a" style="left:21px;top:686px;width:63px;height:17px;background:linear-gradient(#fafafa,#f0f0f0);border-right:1px solid #2a2a2a;border-bottom:1px solid #2a2a2a;font-size:9.3px;color:#222;padding:4px 0 0 5px;white-space:nowrap">Построение</div>

<div id="view" class="a"></div>
<svg style="left:0;top:0" width="1280" height="769" viewBox="0 0 1280 769">
<defs><pattern id="dots" width="5" height="5.5" patternUnits="userSpaceOnUse" patternTransform="rotate(-7)"><circle cx="2.5" cy="2.7" r="0.75" fill="#7e7e7e"/></pattern></defs>
<polygon points="641.6,164.7 648.5,178.0 644.6,185.0 619.8,380.0 617.0,395.0 612.0,393.0 625.5,300.0 636.5,200.0" fill="#a9a9a9" stroke="#121a26" stroke-width="1.25" stroke-linejoin="round"/>
<polygon points="610.0,390.4 614.0,400.0 612.4,440.0 600.6,525.0 594.4,522.0 601.8,459.0" fill="#a5a5a5" stroke="#121a26" stroke-width="1.25" stroke-linejoin="round"/>
<polygon points="662.7,77.6 671.2,145.2 664.4,198.5 659.2,221.9 625.6,471.9 620.4,510.0 603.8,622.5 600.6,535.0 612.4,440.0 629.7,300.0 644.6,185.0 648.0,170.0" fill="#a7a7a7" stroke="#121a26" stroke-width="1.25" stroke-linejoin="round"/>
<clipPath id="pc"><polygon points="662.7,77.6 671.2,145.2 664.4,198.5 659.2,221.9 625.6,471.9 620.4,510.0 603.8,622.5 600.6,535.0 612.4,440.0 629.7,300.0 644.6,185.0 648.0,170.0"/></clipPath>
<rect x="595" y="198" width="70" height="317" fill="url(#dots)" clip-path="url(#pc)"/>
<path d="M630.5 262 L616.5 392" stroke="#e8eef6" stroke-width="1.1"/>
<path d="M606 458 L616 461 L615.5 465 L605.5 463 Z" fill="#b0b0b0" stroke="#222" stroke-width="0.7"/>
<path d="M641 234 L649 235.5 L648.5 239 L640.5 237.5 Z" fill="#b0b0b0" stroke="#222" stroke-width="0.7"/>
<polygon points="659.2,221.9 710.2,234.6 675.6,477.4 625.6,471.9" fill="#868686" stroke="#121a26" stroke-width="1.25" stroke-linejoin="round"/>
<polygon points="662.9,220.0 710.2,226.0 706.6,252.0 657.4,246.5" fill="#8e8e8e" stroke="#121a26" stroke-width="1.25" stroke-linejoin="round"/>
<circle cx="667.5" cy="233.5" r="2.8" fill="#8e8e8e" stroke="#2a2a2a" stroke-width="1"/><circle cx="695.5" cy="237" r="2.8" fill="#8e8e8e" stroke="#2a2a2a" stroke-width="1"/>
<polygon points="664.0,198.0 820.2,189.4 817.6,208.0 843.8,215.6 871.7,204.7 878.5,263.8 848.1,246.9 800.7,249.5 828.6,267.2 662.9,220.0" fill="#9c9c9c" stroke="#121a26" stroke-width="1.25" stroke-linejoin="round"/>
<polygon points="662.9,201.9 710.2,206.4 712.0,223.7 662.9,216.0" fill="#8a8a8a" stroke="#121a26" stroke-width="1.25" stroke-linejoin="round"/>
<polygon points="708.5,209 711,208 712,222.5 707.5,222" fill="#d8e6f5"/>
<circle cx="665" cy="215.5" r="3.3" fill="#dfe8f4" stroke="#1b2230" stroke-width="1.1"/><circle cx="693.7" cy="219" r="2.8" fill="#e6eef8" stroke="#444" stroke-width="0.8"/>
<ellipse cx="783.8" cy="223.8" rx="25.4" ry="8.1" transform="rotate(5 783.8 223.8)" fill="#86b6e6" stroke="#1b2230" stroke-width="1.1"/>
<polygon points="789.0,218.0 789.0,230.5 802.0,224.0" fill="#5e5e5e" stroke="#1b2230" stroke-width="0.8"/>
<polygon points="794.0,201.3 820.2,189.4 817.6,208.0" fill="#5f5f5f" stroke="#121a26" stroke-width="1.25" stroke-linejoin="round"/>
<polygon points="848.1,246.9 878.5,263.8 875.1,292.6 844.7,274.0" fill="#a2a2a2" stroke="#121a26" stroke-width="1.25" stroke-linejoin="round"/>
<polygon points="795.7,259.6 828.6,267.2 825.2,296.0 794.0,278.2" fill="#a2a2a2" stroke="#121a26" stroke-width="1.25" stroke-linejoin="round"/>
<polygon points="621.9,501.0 676.0,476.5 752.1,473.1 753.0,483.3 805.4,497.6 832.4,487.5 835.0,512.8 808.8,528.0 791.9,529.7 789.3,549.2" fill="#9c9c9c" stroke="#121a26" stroke-width="1.25" stroke-linejoin="round"/>
<ellipse cx="739.5" cy="506.1" rx="21" ry="8" transform="rotate(7 739.5 506.1)" fill="#d3e3f6" stroke="#1b2230" stroke-width="1.1"/>
<polygon points="625.6,471.9 675.6,477.4 672.0,504.7 621.9,500.1" fill="#8c8c8c" stroke="#121a26" stroke-width="1.25" stroke-linejoin="round"/>
<circle cx="631.5" cy="486" r="3" fill="#f0f4fa" stroke="#333" stroke-width="0.8"/><circle cx="659.5" cy="490" r="3" fill="#f0f4fa" stroke="#333" stroke-width="0.8"/>
<polygon points="756.4,455.4 783.4,443.5 780.9,469.7 753.0,483.3" fill="#626262" stroke="#121a26" stroke-width="1.25" stroke-linejoin="round"/>
<polygon points="808.8,469.7 836.7,458.7 832.4,487.5 805.4,497.6" fill="#626262" stroke="#121a26" stroke-width="1.25" stroke-linejoin="round"/>
<polygon points="761.4,503.5 792.7,522.1 789.3,549.2 758.0,531.4" fill="#a4a4a4" stroke="#121a26" stroke-width="1.25" stroke-linejoin="round"/>
<polygon points="812.2,501.0 842.6,517.9 838.4,546.7 808.8,528.0" fill="#a4a4a4" stroke="#121a26" stroke-width="1.25" stroke-linejoin="round"/>
<polygon points="593.3,533.0 606.4,533.0 599.0,575.0 588.0,575.0" fill="#8e8e8e" stroke="#121a26" stroke-width="1.25" stroke-linejoin="round"/>
<circle cx="600" cy="524" r="3.2" fill="#a06a3a" stroke="#333" stroke-width="0.7"/>
<polygon points="596.0,528.0 604.0,528.0 604.5,533.5 595.0,533.5" fill="#ececec" stroke="#444" stroke-width="0.7"/>
<path d="M600.5 536 L595 574" stroke="#2a2a2a" stroke-width="1.6" stroke-dasharray="2 1"/>
<polygon points="587.5,574.0 599.0,574.0 591.0,636.0 579.8,636.0" fill="#101010"/>
<polygon points="579.8,635.0 591.0,635.0 590.5,640.0 579.3,640.0" fill="#e06a20"/>
<polygon points="579.5,640.0 590.5,640.0 590.0,645.0 579.0,645.0" fill="#f0f0f0" stroke="#555" stroke-width="0.6"/>
<polygon points="582.0,645.0 586.5,645.0 584.5,658.0 581.0,658.0" fill="#b06a40"/>
<path d="M187 664.5 Q198 663 210 665.5 L210 668.5 Q198 668.5 187 665.5 Z" fill="#18c018" stroke="#18c018" stroke-width="0.6"/>
<path d="M209.5 673 L211.5 673 Q210 682 207.5 689 Q206.5 682 209.5 673 Z" fill="#2a7ad8" stroke="#2a7ad8" stroke-width="0.8"/>
<path d="M209.5 666 L212 665.5 L214.5 673 L211 675 L209 673 Z" fill="#e41010"/><path d="M212.5 674 L214.5 680" stroke="#e84040" stroke-width="0.8"/>
<text x="179.5" y="667.5" font-size="8" fill="#70d070" font-family="Liberation Sans">Y</text><text x="204.5" y="698" font-size="8" fill="#5090d8" font-family="Liberation Sans">Z</text>
</svg>
<div id="bottom" class="a"></div>
<div id="inp" class="a"></div>
<div class="a" style="left:5px;top:77px;width:2px;height:2px;background:#9a9a9a"></div>
<div class="a" style="left:8px;top:77px;width:2px;height:2px;background:#9a9a9a"></div>
<div class="a" style="left:11px;top:77px;width:2px;height:2px;background:#9a9a9a"></div>
<div class="a" style="left:14px;top:77px;width:2px;height:2px;background:#9a9a9a"></div>
<div class="a hl" style="left:5px;top:81px;width:13px;height:15px"></div>
<svg style="left:6px;top:83px" width="12" height="11" viewBox="0 0 12 11"><path d="M0.5 3 L3 0.5 H11.5 L9 3 Z" fill="#7ad8ff"/><path d="M9 3 L11.5 0.5 V8 L9 10.5 Z" fill="#0a1aa8"/><rect x="0.5" y="3" width="8.5" height="7.5" fill="#2a7af0"/></svg>
<svg style="left:7px;top:97px" width="10" height="10" viewBox="0 0 10 10"><path d="M2 1 H8 L3 5 H8 L2 9" fill="none" stroke="#111" stroke-width="1.5"/></svg>
<svg style="left:5px;top:108px" width="12" height="11" viewBox="0 0 12 11"><path d="M1 6 L6 1 L11 5 L6 10 Z" fill="#1a5ee0" stroke="#0a1890"/><path d="M3 6 L6 3 L9 5" fill="none" stroke="#38d8ff"/></svg>
<svg style="left:5px;top:121px" width="12" height="12" viewBox="0 0 12 12"><path d="M1 7 L6 2 L11 6 L6 11 Z" fill="#1a5ee0" stroke="#0a1890"/><path d="M0 0 L12 12" stroke="#0a1890" stroke-width="1.2"/></svg>
<svg style="left:6px;top:134px" width="11" height="11" viewBox="0 0 11 11"><path d="M1 10 L5.5 1 L10 10" fill="none" stroke="#111" stroke-width="1.6"/><path d="M3 10 L5.5 5 L8 10" fill="none" stroke="#111" stroke-width="1"/></svg>
<svg style="left:6px;top:147px" width="11" height="12" viewBox="0 0 11 12"><path d="M0.5 1 H10.5 L6.5 6 V11 H4.5 V6 Z" fill="#1a5ee0" stroke="#0a1890"/><path d="M1.5 1.5 H9.5" stroke="#38d8ff" stroke-width="1.5"/></svg>
<svg style="left:5px;top:160px" width="13" height="12" viewBox="0 0 13 12"><path d="M2 1 V6 H7" fill="none" stroke="#111" stroke-width="1.2"/><circle cx="3" cy="2" r="1.5" fill="none" stroke="#111"/><path d="M1 11 Q6 6 12 11" fill="#1a5ee0" stroke="#0a1890"/><path d="M8 3 L11 6" stroke="#111"/></svg>
<div class="a" style="left:3px;top:176px;width:14px;height:1px;background:#c8c8c8"></div>
<svg style="left:4px;top:181px" width="13" height="13" viewBox="0 0 13 13"><path d="M2 4 L5 1 L12.5 1 L10 4 Z" fill="#3f6fe0"/><path d="M10 4 L12.5 1 L12.5 9.5 L10 12.5 Z" fill="#0a1aa8"/><rect x="1.5" y="4" width="8.5" height="8.5" fill="#1a5ee0"/><path d="M3.5 5.5 H8.5 V10.5" fill="none" stroke="#38d8ff" stroke-width="1.4"/><rect x="1" y="8" width="4" height="4.5" fill="#38d8ff"/><path d="M1.5 4 L5 1 H12.5 V9.5 L10 12.5 H1 Z" fill="none" stroke="#0a1890" stroke-width="0.9"/></svg>
<svg style="left:4px;top:197px" width="13" height="13" viewBox="0 0 13 13"><path d="M2 4 L5 1 L12.5 1 L10 4 Z" fill="#3f6fe0"/><path d="M10 4 L12.5 1 L12.5 9.5 L10 12.5 Z" fill="#0a1aa8"/><rect x="1.5" y="4" width="8.5" height="8.5" fill="#1a5ee0"/><path d="M4 9 H8 V6" fill="none" stroke="#38d8ff" stroke-width="1.2"/><path d="M1.5 4 L5 1 H12.5 V9.5 L10 12.5 H1 Z" fill="none" stroke="#0a1890" stroke-width="0.9"/></svg>
<svg style="left:4px;top:213px" width="14" height="13" viewBox="0 0 14 13"><path d="M4 4 L7 1 L13 1 L10.5 4 Z" fill="#7ad8ff"/><path d="M10.5 4 L13 1 V9.5 L10.5 12.5 Z" fill="#0a1aa8"/><rect x="4" y="4" width="6.5" height="8.5" fill="#2a8af0"/><rect x="0" y="7" width="3" height="2" fill="#111"/></svg>
<div class="a" style="left:3px;top:231px;width:14px;height:1px;background:#c8c8c8"></div>
<svg style="left:4px;top:237px" width="13" height="13" viewBox="0 0 13 13"><rect x="0.5" y="0.5" width="12" height="12" fill="#1a5ee0" stroke="#0a1890"/><rect x="3" y="3" width="7" height="7" fill="#fff" stroke="#0a1890"/><rect x="4.5" y="4.5" width="4" height="4" fill="#1a5ee0"/></svg>
<svg style="left:4px;top:254px" width="13" height="13" viewBox="0 0 13 13"><path d="M0.5 12.5 V5 Q0.5 0.5 6 0.5 Q12 1 12.5 8 L10 12.5 Z" fill="#3a70f0" stroke="#0a1890"/><path d="M5 1.5 Q11 2 11.5 7" fill="none" stroke="#38d8ff" stroke-width="1.5"/></svg>
<svg style="left:4px;top:271px" width="13" height="13" viewBox="0 0 13 13"><rect x="1" y="1" width="11" height="11" fill="#d8d8d8" stroke="#b0b0b0"/><circle cx="6.5" cy="6.5" r="3" fill="none" stroke="#b8b8b8" stroke-width="1.2"/></svg>
<svg style="left:4px;top:288px" width="13" height="13" viewBox="0 0 13 13"><path d="M1 12 L3 2 H12 L10 12 Z" fill="#d0d0d0" stroke="#b8b8b8"/><path d="M5 4 H10 L8 9" fill="none" stroke="#aaa" stroke-width="1.2"/></svg>
<svg style="left:4px;top:305px" width="13" height="12" viewBox="0 0 13 12"><path d="M0.5 11.5 L3 4 L7 0.5 H11 L12.5 5 L10 11.5 Z" fill="#3060e8" stroke="#0a1890"/><path d="M3.5 4 L7 1 H10.5" fill="none" stroke="#6aa0ff"/></svg>
<svg style="left:4px;top:321px" width="13" height="13" viewBox="0 0 13 13"><path d="M1 4 L4 1 H12.5 L10 4 Z" fill="#3f6fe0"/><path d="M10 4 L12.5 1 V9.5 L10 12.5 Z" fill="#0a1aa8"/><rect x="1" y="4" width="9" height="8.5" fill="#1a5ee0" stroke="#0a1890" stroke-width="0.8"/><path d="M4 9 H7 V6" fill="none" stroke="#7ad0ff"/></svg>
<svg style="left:3px;top:337px" width="14" height="13" viewBox="0 0 14 13"><path d="M1 12 V6 L6 1 L12 6 L9 12 Z" fill="#2a80f0" stroke="#0a1890"/><path d="M4 7 Q6 4 9 7" fill="none" stroke="#fff" stroke-width="1.3"/><path d="M11 11 H13 V13" stroke="#555"/></svg>
<svg style="left:3px;top:354px" width="14" height="13" viewBox="0 0 14 13"><rect x="1" y="1" width="10" height="10" fill="#3a8af0" stroke="#0a1890"/><path d="M3 4 Q6 1 9 4 Q6 9 3 7" fill="none" stroke="#fff" stroke-width="1.2"/><path d="M0 11 H7" stroke="#0a1890" stroke-width="1.6"/></svg>
<svg style="left:3px;top:370px" width="14" height="13" viewBox="0 0 14 13"><path d="M1 11 L4 3 H12 L9 11 Z" fill="#3a70e8" stroke="#0a1890"/><path d="M10 1 L3 12" stroke="#e02020" stroke-width="1.5"/><path d="M4 6 H10" stroke="#fff" stroke-width="1"/></svg>
<svg style="left:3px;top:387px" width="14" height="13" viewBox="0 0 14 13"><path d="M1 12 L3 5 H9 L7 12 Z" fill="#3a70e8" stroke="#0a1890"/><circle cx="10" cy="4" r="3" fill="#fff" stroke="#111" stroke-width="1.3"/><path d="M9 4 H11" stroke="#111"/></svg>
<div class="a" style="left:1px;top:404px;width:18px;height:10px;background:linear-gradient(#e4e4e4,#cfcfcf);border-radius:0 0 3px 3px"></div>
<svg style="left:12px;top:406px" width="5" height="6" viewBox="0 0 5 6"><path d="M0 0 V6 M1.5 0.5 L4.5 3 L1.5 5.5 Z" stroke="#222" fill="#222" stroke-width="0.8"/></svg>
<svg style="left:25px;top:93px" width="11" height="13" viewBox="0 0 11 13"><path d="M2 0 V12 M2 3 H6 M2 7 H6 M2 11 H6" stroke="#111" stroke-width="1.4"/><rect x="5" y="5" width="5" height="7" fill="#555" stroke="#111"/><rect x="0" y="0" width="4" height="3" fill="#111"/></svg>
<svg style="left:42px;top:93px" width="12" height="13" viewBox="0 0 12 13"><path d="M1 1 V12 M1 2 H4 M1 6.5 H4 M1 11 H4 M5 2 H11 M5 6.5 H11 M5 11 H11" stroke="#a8a8a8" stroke-width="1.2"/></svg>
<svg style="left:57px;top:98px" width="5" height="3" viewBox="0 0 5 3"><path d="M0 0 H5 L2.5 3 Z" fill="#999"/></svg>
<div class="a" style="left:67px;top:93px;width:1px;height:13px;background:#c0c0c0"></div>
<div class="a hl" style="left:71px;top:91px;width:17px;height:17px"></div>
<svg style="left:74px;top:92px" width="11" height="14" viewBox="0 0 11 14"><rect x="1" y="1" width="9" height="12" rx="1" fill="#fff" stroke="#1a2a80" stroke-width="1.5"/><path d="M1 6 H10" stroke="#1a2a80" stroke-width="1.5"/><rect x="3" y="3" width="5" height="2" fill="#e06060"/><rect x="3" y="8" width="5" height="3" fill="#1a2a80"/></svg>
<svg style="left:90px;top:93px" width="12" height="12" viewBox="0 0 12 12"><rect x="0.5" y="0.5" width="6" height="11" fill="#ddd" stroke="#aaa"/><rect x="6" y="2" width="5.5" height="7" fill="#eee" stroke="#aaa"/><path d="M2 3 H5 M2 6 H5 M2 9 H5" stroke="#999"/></svg>
<div class="a" style="left:154px;top:113px;width:14px;height:389px;background:linear-gradient(90deg,#f0f0f0,#f8f8f8)"></div>
<svg style="left:158px;top:117px" width="6" height="4" viewBox="0 0 6 4"><path d="M0 4 L3 0 L6 4 Z" fill="#505050"/></svg>
<div class="a" style="left:155px;top:127px;width:12px;height:208px;background:linear-gradient(90deg,#f4f4f4,#e2e2e2 60%,#d4d4d4);border:1px solid #a9a9a9;border-radius:2px"></div>
<div class="a" style="left:158px;top:228px;width:6px;height:1px;background:#777;box-shadow:0 2px 0 #777,0 4px 0 #777"></div>
<svg style="left:158px;top:492px" width="6" height="4" viewBox="0 0 6 4"><path d="M0 0 L3 4 L6 0 Z" fill="#505050"/></svg>
<div class="a" style="left:24px;top:502px;width:144px;height:13px;background:#f0f0f0"></div>
<svg style="left:28px;top:505px" width="4" height="6" viewBox="0 0 4 6"><path d="M4 0 L0 3 L4 6 Z" fill="#505050"/></svg>
<div class="a" style="left:38px;top:502px;width:67px;height:12px;background:linear-gradient(#f4f4f4,#e4e4e4 50%,#d2d2d2);border:1px solid #a9a9a9;border-radius:2px"></div>
<div class="a" style="left:68px;top:505px;width:1px;height:5px;background:#666;box-shadow:2px 0 0 #666,4px 0 0 #666"></div>
<svg style="left:146px;top:505px" width="4" height="6" viewBox="0 0 4 6"><path d="M0 0 L4 3 L0 6 Z" fill="#505050"/></svg>
<div class="a" style="left:20px;top:709.0px;width:2px;height:1px;background:#a0a0a0"></div>
<div class="a" style="left:20px;top:712.5px;width:2px;height:1px;background:#a0a0a0"></div>
<div class="a" style="left:20px;top:716.0px;width:2px;height:1px;background:#a0a0a0"></div>
<div class="a" style="left:20px;top:719.5px;width:2px;height:1px;background:#a0a0a0"></div>
<div class="a" style="left:20px;top:723.0px;width:2px;height:1px;background:#a0a0a0"></div>
<div class="a" style="left:20px;top:726.5px;width:2px;height:1px;background:#a0a0a0"></div>
<div class="a" style="left:20px;top:730.0px;width:2px;height:1px;background:#a0a0a0"></div>
<div class="a" style="left:20px;top:733.5px;width:2px;height:1px;background:#a0a0a0"></div>
<div class="a" style="left:20px;top:737.0px;width:2px;height:1px;background:#a0a0a0"></div>
<div class="a" style="left:20px;top:740.5px;width:2px;height:1px;background:#a0a0a0"></div>
<div class="a" style="left:20px;top:744.0px;width:2px;height:1px;background:#a0a0a0"></div>
<div class="a" style="left:20px;top:747.5px;width:2px;height:1px;background:#a0a0a0"></div>
<div class="a" style="left:1214px;top:756px;width:1px;height:13px;background:#d0ccc8"></div>
<div id="status" class="a"><div class="t a">Щелкните левой кнопкой мыши на объекте для его выделения (вместе с Ctrl - добавить к выделенным)</div></div>
</body></html>
